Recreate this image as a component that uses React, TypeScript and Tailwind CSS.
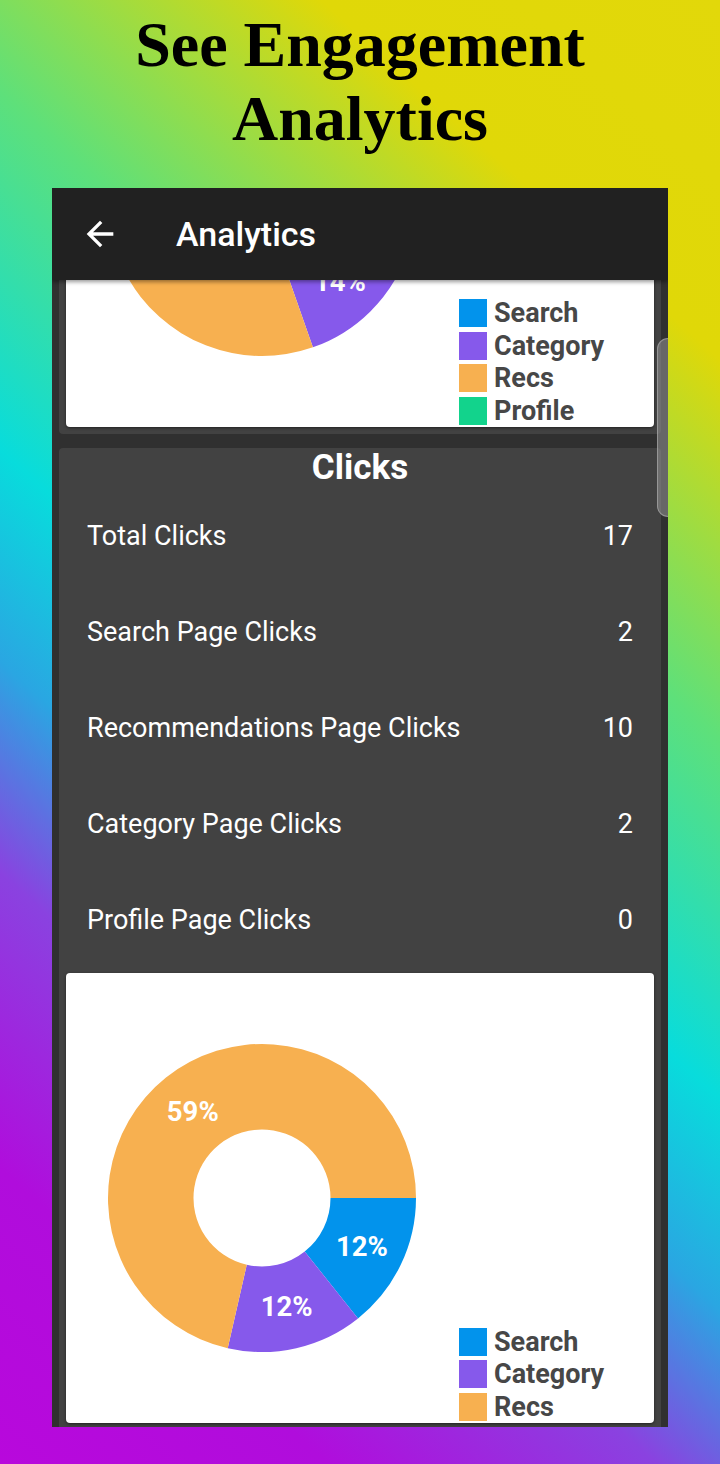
import React from "react";

type Slice = { color: string; a0: number; a1: number; label?: string };

const BLUE = "#0293ec";
const PURPLE = "#8659eb";
const ORANGE = "#f7b050";
const GREEN = "#12d38c";

function arcPath(cx: number, cy: number, r0: number, r1: number, a0: number, a1: number) {
  const rad = (d: number) => (d * Math.PI) / 180;
  const p = (r: number, a: number) => [cx + r * Math.cos(rad(a)), cy + r * Math.sin(rad(a))];
  const large = a1 - a0 > 180 ? 1 : 0;
  const [x0, y0] = p(r1, a0);
  const [x1, y1] = p(r1, a1);
  const [x2, y2] = p(r0, a1);
  const [x3, y3] = p(r0, a0);
  return `M${x0} ${y0} A${r1} ${r1} 0 ${large} 1 ${x1} ${y1} L${x2} ${y2} A${r0} ${r0} 0 ${large} 0 ${x3} ${y3} Z`;
}

function Donut({ slices }: { slices: Slice[] }) {
  const cx = 196;
  const cy = 225;
  const r0 = 68.5;
  const r1 = 154;
  return (
    <svg width="393" height="450" viewBox="0 0 393 450" className="shrink-0 block">
      {slices.map((s, i) => (
        <path key={i} d={arcPath(cx, cy, r0, r1, s.a0, s.a1)} fill={s.color} />
      ))}
      {slices.map((s, i) => {
        if (!s.label) return null;
        const m = ((s.a0 + s.a1) / 2) * (Math.PI / 180);
        const x = cx + 111 * Math.cos(m);
        const y = cy + 111 * Math.sin(m);
        return (
          <text
            key={"t" + i}
            x={x}
            y={y}
            textAnchor="middle"
            dominantBaseline="central"
            fill="#ffffff"
            fontFamily="Roboto, sans-serif"
            fontWeight={700}
            fontSize={27.5}
          >
            {s.label}
          </text>
        );
      })}
    </svg>
  );
}

function Legend({ items }: { items: { color: string; name: string }[] }) {
  return (
    <div className="flex flex-col justify-end">
      {items.map((it) => (
        <div key={it.name} className="flex items-center h-[32.5px] gap-[7px]">
          <div className="w-[28px] h-[28px]" style={{ backgroundColor: it.color }} />
          <span className="text-[27px] font-bold leading-[32px] text-[#474747]">{it.name}</span>
        </div>
      ))}
    </div>
  );
}

function ChartCard({ slices, items }: { slices: Slice[]; items: { color: string; name: string }[] }) {
  return (
    <div className="flex h-[450px] bg-white rounded-[4px] shadow-[0_1px_3px_rgba(0,0,0,0.5)] overflow-hidden">
      <Donut slices={slices} />
      <Legend items={items} />
    </div>
  );
}

const rows: [string, string][] = [
  ["Total Clicks", "17"],
  ["Search Page Clicks", "2"],
  ["Recommendations Page Clicks", "10"],
  ["Category Page Clicks", "2"],
  ["Profile Page Clicks", "0"],
];

export default function App() {
  const topSlices: Slice[] = [
    { color: BLUE, a0: 0, a1: 20.1 },
    { color: PURPLE, a0: 20.1, a1: 70.7, label: "14%" },
    { color: ORANGE, a0: 70.7, a1: 315 },
    { color: GREEN, a0: 315, a1: 360 },
  ];
  const bottomSlices: Slice[] = [
    { color: BLUE, a0: 0, a1: 51.43, label: "12%" },
    { color: PURPLE, a0: 51.43, a1: 102.86, label: "12%" },
    { color: ORANGE, a0: 102.86, a1: 360, label: "59%" },
  ];
  const legend4 = [
    { color: BLUE, name: "Search" },
    { color: PURPLE, name: "Category" },
    { color: ORANGE, name: "Recs" },
    { color: GREEN, name: "Profile" },
  ];
  const legend3 = legend4.slice(0, 3);

  return (
    <div className="w-[720px] h-[1464px] overflow-hidden bg-[linear-gradient(42deg,#b808dc_0%,#b00ddc_14%,#8a42e0_28%,#2aa6e2_38%,#08dcdc_48%,#5ee07a_65%,#e0d808_83%,#e2d80a_100%)] font-['Roboto',sans-serif]">
      <h1 className="pt-[8px] text-center font-['Liberation_Serif',serif] font-bold text-[64px] leading-[74px] text-black">
        See Engagement
        <br />
        Analytics
      </h1>

      <div className="relative mt-[32px] mx-[52px] h-[1239px] flex flex-col bg-[#303030] overflow-hidden">
        <div className="relative z-10 h-[92px] shrink-0 bg-[#212121] flex items-center shadow-[0_2px_4px_rgba(0,0,0,0.4)]">
          <div className="w-[124px] flex items-center pl-[28px]">
            <svg width="40" height="40" viewBox="0 0 24 24" fill="#ffffff">
              <path d="M20 11H7.83l5.59-5.59L12 4l-8 8 8 8 1.41-1.41L7.83 13H20v-2z" />
            </svg>
          </div>
          <span className="text-white text-[34px] font-medium leading-none">Analytics</span>
        </div>

        <div className="flex-1 overflow-hidden">
          <div className="-mt-[310px] px-[7px] flex flex-col gap-[14px]">
            <div className="bg-[#424242] rounded-[4px] p-[7px]">
              <ChartCard slices={topSlices} items={legend4} />
            </div>

            <div className="bg-[#424242] rounded-[4px] px-[7px] pb-[7px]">
              <div className="h-[40px] text-center text-white font-bold text-[35px] leading-[40px]">Clicks</div>
              <div className="flex flex-col">
                {rows.map(([k, v]) => (
                  <div key={k} className="h-[96px] flex items-center justify-between px-[21px] text-white text-[27px] leading-none">
                    <span>{k}</span>
                    <span>{v}</span>
                  </div>
                ))}
              </div>
              <div className="mt-[5px]">
                <ChartCard slices={bottomSlices} items={legend3} />
              </div>
            </div>
          </div>
        </div>

        <div className="absolute right-0 top-[150px] w-[11px] h-[179px] rounded-l-[12px] bg-[rgba(150,150,150,0.55)] border-l border-t border-b border-[rgba(200,200,200,0.45)] z-20" />
      </div>
    </div>
  );
}
